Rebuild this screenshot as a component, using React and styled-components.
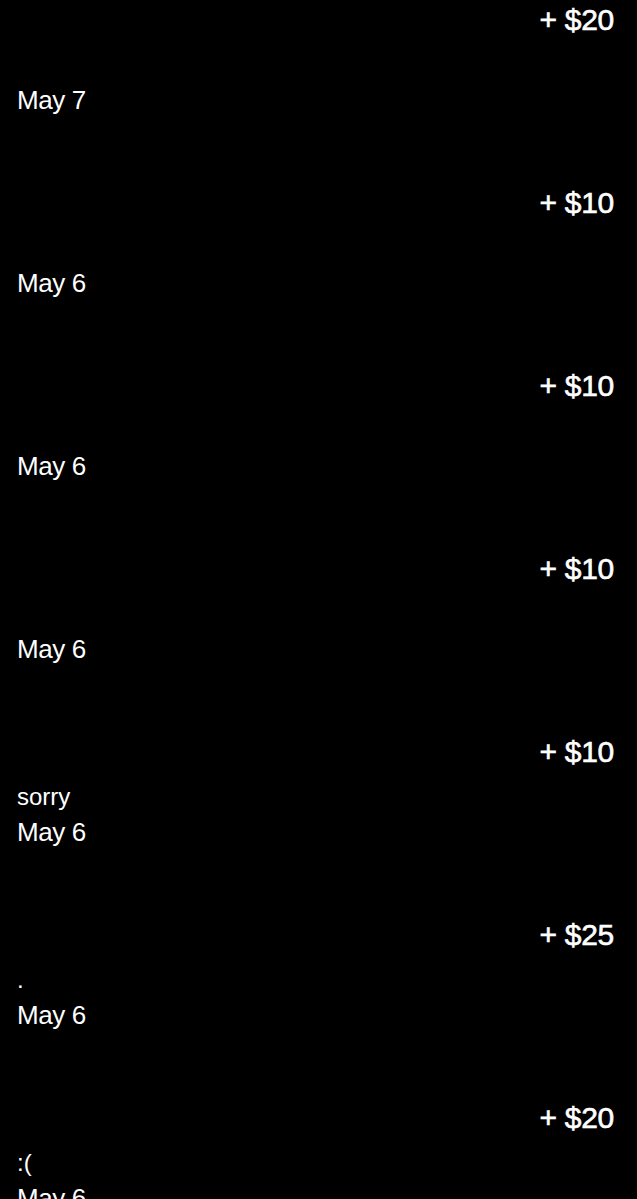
import React from "react";
import styled, { createGlobalStyle } from "styled-components";

const GlobalStyle = createGlobalStyle`
  html, body {
    margin: 0;
    padding: 0;
    background: #000;
  }
  body {
    font-family: "Liberation Sans", Arial, sans-serif;
    color: #fff;
  }
`;

const List = styled.div`
  display: flex;
  flex-direction: column;
  padding: 0 23px 0 17px;
  overflow: hidden;
  height: 1199px;
`;

const Row = styled.div`
  display: flex;
  flex-direction: column;
  height: 183px;
  flex-shrink: 0;
`;

const Amount = styled.div`
  align-self: flex-end;
  height: 40px;
  line-height: 40px;
  font-size: 30px;
  font-weight: 400;
  letter-spacing: -0.3px;
  -webkit-text-stroke: 0.6px #fff;
`;

const Note = styled.div`
  margin-top: 10px;
  height: 30px;
  line-height: 30px;
  font-size: 24px;
`;

const DateText = styled.div`
  height: 40px;
  line-height: 40px;
  font-size: 26px;
  letter-spacing: -0.4px;
`;

const items = [
  { amount: 20, note: "", date: "May 7" },
  { amount: 10, note: "", date: "May 6" },
  { amount: 10, note: "", date: "May 6" },
  { amount: 10, note: "", date: "May 6" },
  { amount: 10, note: "sorry", date: "May 6" },
  { amount: 25, note: ".", date: "May 6" },
  { amount: 20, note: ":(", date: "May 6" },
];

function App() {
  return (
    <>
      <GlobalStyle />
      <List>
        {items.map((item, i) => (
          <Row key={i}>
            <Amount>+ ${item.amount}</Amount>
            <Note>{item.note}</Note>
            <DateText>{item.date}</DateText>
          </Row>
        ))}
      </List>
    </>
  );
}

export default App;
